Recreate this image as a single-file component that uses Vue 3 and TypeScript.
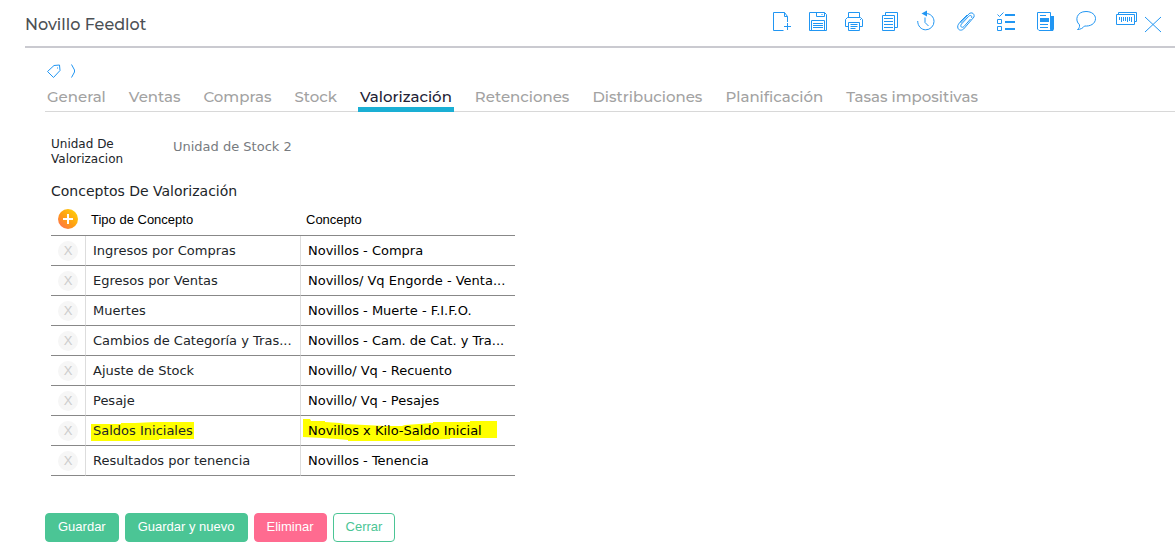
<script setup lang="ts">
import { ref } from 'vue'

interface Concept {
  type: string
  name: string
  marked?: boolean
}

const tabs: string[] = [
  'General',
  'Ventas',
  'Compras',
  'Stock',
  'Valorización',
  'Retenciones',
  'Distribuciones',
  'Planificación',
  'Tasas impositivas',
]
const activeTab = ref('Valorización')
const unit = ref('Unidad de Stock 2')

const concepts = ref<Concept[]>([
  { type: 'Ingresos por Compras', name: 'Novillos - Compra' },
  { type: 'Egresos por Ventas', name: 'Novillos/ Vq Engorde - Venta...' },
  { type: 'Muertes', name: 'Novillos - Muerte - F.I.F.O.' },
  { type: 'Cambios de Categoría y Tras...', name: 'Novillos - Cam. de Cat. y Tra...' },
  { type: 'Ajuste de Stock', name: 'Novillo/ Vq - Recuento' },
  { type: 'Pesaje', name: 'Novillo/ Vq - Pesajes' },
  { type: 'Saldos Iniciales', name: 'Novillos x Kilo-Saldo Inicial', marked: true },
  { type: 'Resultados por tenencia', name: 'Novillos - Tenencia' },
])

function removeConcept(index: number) {
  concepts.value.splice(index, 1)
}
</script>

<template>
  <div class="page">
    <header class="header">
      <h1 class="title">Novillo Feedlot</h1>
      <div class="tools">
        <div class="tool-group">
          <button type="button" class="tool" aria-label="Nuevo">
            <svg viewBox="0 0 20 20"><path d="M11.5 18.500H1.500V.5H12.500L15.500 4.500V10M12.500.5V4.500H15.500M15.500 11V18M12 14.500H19" /></svg>
          </button>
          <button type="button" class="tool" aria-label="Guardar registro">
            <svg viewBox="0 0 20 20"><path d="M1.500.5H16.500L18.500 2.500V18.500H1.500ZM8.500.5V4.500H16.500V.5M13.500 2.500H14.500M3.500 18V8.500H16.500V18M5 11.500H15M5 13.500H15M5 15.500H15" /></svg>
          </button>
          <button type="button" class="tool" aria-label="Imprimir">
            <svg viewBox="0 0 20 20"><path d="M4.500 5V.5H15.500V5M4.500 14.500H1.500V7.500L3.500 5.500H16.500L18.500 7.500V14.500H15.500M4.500 10.500H15.500V18.500H4.500ZM6.500 12.500H13.500M6.500 14.500H13.500M6.500 16.500H11.500M16 7.500H17" /></svg>
          </button>
          <button type="button" class="tool" aria-label="Copiar">
            <svg viewBox="0 0 20 20"><path d="M5.500 3V.5H17.500V15.500H15M2.500 3.500H14.500V18.500H2.500ZM4 6.500H13M4 9.500H13M4 12.500H13M4 15.500H13" /></svg>
          </button>
          <button type="button" class="tool" aria-label="Historial">
            <svg viewBox="0 0 20 20"><path class="solid" d="M5.500 1.500 11-1.500V4.500Z" /><path d="M10 1.500C14.500 1.500 18 5 18 9.500A8.300 8.300 0 0 1 9.700 17.800C5.200 17.800 1.700 14 1.700 9" /><path d="M9 5.500V10.500L12.500 14" /></svg>
          </button>
        </div>
        <div class="tool-group wide">
          <button type="button" class="tool" aria-label="Adjuntos">
            <svg viewBox="0 0 20 20"><path d="M4.500 11 12 3C14-.5 19 .5 18 5L8.500 16C6.500 19 2 19 1.700 15C1.500 13 3 11.500 5 9L11 3M14.500 7 8 14.500C6 16.500 3.500 14.500 5.500 12L12.500 4.500C14 2.500 17 4 15.500 6" /></svg>
          </button>
          <button type="button" class="tool" aria-label="Tareas">
            <svg viewBox="0 0 20 20"><path d="M1.500 2.500 3.500 4.500 7.500.5M1.500 7.500H5.500V11.500H1.500ZM1.500 14.500H5.500V18.500H1.500Z" /><path class="thick" d="M9 3H19M9 10H19M9 17H19" /></svg>
          </button>
          <button type="button" class="tool" aria-label="Novedades">
            <svg viewBox="0 0 20 20"><path class="solid" d="M4 6H13V10H4ZM15 4H18V17L17 19H14Z" /><path d="M14.500 17V.5H1.500V17L3 18.500H16M4 3.500H10M4 12.500H12M4 15.500H12" /></svg>
          </button>
          <button type="button" class="tool" aria-label="Comentarios">
            <svg viewBox="0 0 20 20"><path d="M3.500 12.800C-1.500 8.500 .5-.5 10-.5C16-.5 19.500 3 19.500 6.500C19.500 12 14 14.500 8.500 14C7 16 4.500 17.500 1.500 17.500C3 16.500 3.800 15 3.500 12.800Z" /></svg>
          </button>
          <button type="button" class="tool" aria-label="Códigos">
            <svg viewBox="0 0 20 20"><path d="M2.500 2V.5H20.500V9.500H19M.5 2.500H18.500V12.500H.5ZM3.500 5V8M5.500 5V10M7.500 5V9M9.500 5V9M11.500 5V10M13.500 5V9M15.500 5V10" /></svg>
          </button>
        </div>
        <button type="button" class="tool close" aria-label="Cerrar ventana">
          <svg viewBox="0 0 20 20"><path d="M2 2 18 17M18 2 2 17" /></svg>
        </button>
      </div>
    </header>

    <main class="content">
      <div class="crumbs">
        <svg class="tag" viewBox="0 0 14 14"><path d="M.5 7.500 7 1.500 12.500 1 13 6.500 6.500 13.500Z" /><path d="M10 4H11" /></svg>
        <svg class="chevron" viewBox="0 0 6 14"><path d="M1.500.5 4.500 6V8L1.500 13.500" /></svg>
      </div>
      <nav class="tabs">
        <button
          v-for="tab in tabs"
          :key="tab"
          type="button"
          class="tab"
          :class="{ active: tab === activeTab }"
          @click="activeTab = tab"
        >{{ tab }}</button>
      </nav>

      <section class="panel">
        <div class="field">
          <label for="unit">Unidad De Valorizacion</label>
          <input id="unit" v-model="unit" type="text" readonly />
        </div>

        <h2 class="subtitle">Conceptos De Valorización</h2>
        <table class="grid">
          <colgroup>
            <col class="col-action" />
            <col />
            <col />
          </colgroup>
          <thead>
            <tr>
              <th class="action">
                <button type="button" class="add" aria-label="Agregar concepto">
                  <svg viewBox="0 0 20 20"><path d="M10 5V15M5 10H15" /></svg>
                </button>
              </th>
              <th>Tipo de Concepto</th>
              <th>Concepto</th>
            </tr>
          </thead>
          <tbody>
            <tr v-for="(concept, index) in concepts" :key="concept.type">
              <td class="action">
                <button type="button" class="remove" :aria-label="`Quitar ${concept.type}`" @click="removeConcept(index)">X</button>
              </td>
              <td class="type">
                <span v-if="concept.marked" class="marked">
                  <svg class="mark mark-type" viewBox="0 0 103 19"><path d="M0 2 30 2 30 1 44 1 64 0H103V17H68V18H49V19H0Z" /></svg>
                  <span class="marked-text">{{ concept.type }}</span>
                </span>
                <template v-else>{{ concept.type }}</template>
              </td>
              <td class="name">
                <span v-if="concept.marked" class="marked">
                  <svg class="mark mark-name" viewBox="0 0 194 22"><path d="M0 0H7L8 2H22V3L37 4 42 5 62 6 82 7H99L102 6 130 4V3H167V2H194V19H147V20L117 21V22H45V21L34 20 20 19 0 18Z" /></svg>
                  <span class="marked-text">{{ concept.name }}</span>
                </span>
                <template v-else>{{ concept.name }}</template>
              </td>
            </tr>
          </tbody>
        </table>
      </section>

      <footer class="actions">
        <button type="button" class="btn save">Guardar</button>
        <button type="button" class="btn save">Guardar y nuevo</button>
        <button type="button" class="btn delete">Eliminar</button>
        <button type="button" class="btn outline">Cerrar</button>
      </footer>
    </main>
  </div>
</template>

<style>
body {
  margin: 0;
  background: #fff;
}
</style>

<style scoped>
.page {
  font-family: Verdana, "DejaVu Sans", sans-serif;
  font-size: 13px;
  color: #212529;
}
button {
  padding: 0;
  border: 0;
  background: none;
  font-family: inherit;
  cursor: pointer;
}
svg {
  display: block;
  overflow: visible;
  fill: none;
  stroke: #2196f3;
}
.header {
  display: flex;
  align-items: flex-start;
  justify-content: space-between;
  height: 46px;
  margin-left: 25px;
  border-bottom: 2px solid #cacad0;
}
.title {
  margin: 15px 0 0;
  font: 500 16px/20px Montserrat, Inter, sans-serif;
  color: #4c5054;
}
.tools {
  display: flex;
  padding: 12px 12px 0 0;
  gap: 7px;
}
.tool-group {
  display: flex;
  gap: 16px;
}
.tool-group.wide {
  gap: 20px;
  margin-left: 13px;
}
.tool,
.tool svg {
  width: 20px;
  height: 20px;
}
.tool .solid {
  fill: #2196f3;
  stroke: none;
}
.tool .thick {
  stroke-width: 2px;
}
.close {
  margin-top: 3px;
}
.content {
  padding-left: 45px;
}
.crumbs {
  display: flex;
  gap: 9px;
  padding: 16px 0 0 2px;
}
.tag {
  width: 14px;
  height: 14px;
}
.chevron {
  width: 6px;
  height: 14px;
}
.tabs {
  display: flex;
  gap: 19px;
  height: 33px;
  border-bottom: 1px solid #d8d8d8;
}
.tab {
  height: 34px;
  padding: 9px 2px 0;
  border-bottom: 5px solid transparent;
  font: 500 15px/20px Montserrat, Inter, sans-serif;
  color: #a2a2a2;
  white-space: nowrap;
}
.tab.active {
  border-color: #1aafd4;
  color: #212134;
}
.panel {
  padding: 25px 6px 0;
}
.field {
  display: flex;
  align-items: flex-start;
}
.field label {
  width: 100px;
  margin-right: 22px;
  font-size: 12px;
  line-height: 15px;
}
.field input {
  width: 300px;
  height: 18px;
  padding: 0;
  border: 0;
  outline: 0;
  background: none;
  font-family: inherit;
  font-size: 13px;
  color: #777b80;
}
.subtitle {
  margin: 14px 0 0;
  font-size: 14px;
  font-weight: 400;
  line-height: 20px;
}
.grid {
  width: 464px;
  max-width: 100%;
  margin-top: 4px;
  table-layout: fixed;
  border-spacing: 0;
}
.col-action {
  width: 34px;
}
.grid th,
.grid td {
  box-sizing: border-box;
  padding: 0 7px;
  border-bottom: 1px solid #888;
  text-align: left;
  white-space: nowrap;
}
.grid th {
  height: 31px;
  padding: 0 6px;
  font: 400 13px/20px "Liberation Sans", Arial, sans-serif;
  color: #000;
}
.grid td {
  height: 30px;
  border-left: 1px solid #ddd;
  line-height: 20px;
}
.grid .action {
  padding: 0 7px;
  border-left: 0;
}
.grid th.action {
  padding-bottom: 2px;
}
.name {
  color: #000;
}
.add {
  display: block;
  width: 20px;
  height: 20px;
  border-radius: 50%;
  background: linear-gradient(45deg, #ff6a5c, #ff9d13 45%, #ffd80a);
}
.add svg {
  stroke: #fff;
  stroke-width: 2px;
}
.remove {
  display: block;
  width: 20px;
  height: 20px;
  border-radius: 50%;
  background: #f6f6f6;
  font: 13px/20px "Liberation Sans", Arial, sans-serif;
  color: #ccc;
}
.marked {
  position: relative;
}
.marked-text {
  position: relative;
}
.mark {
  position: absolute;
  fill: #ff0;
  stroke: none;
}
.mark-type {
  top: -1px;
  left: -2px;
  width: 103px;
  height: 19px;
}
.mark-name {
  top: -4px;
  left: -5px;
  width: 194px;
  height: 22px;
}
.actions {
  display: flex;
  gap: 6px;
  padding: 37px 0 10px;
}
.btn {
  height: 29px;
  padding: 0 12px 2px;
  border: 1px solid #4bc595;
  border-radius: 4px;
  font: 13px/20px "Liberation Sans", Arial, sans-serif;
  color: #fff;
}
.save {
  background: #4bc595;
}
.delete {
  border-color: #ff6b90;
  background: #ff6b90;
}
.outline {
  background: #fff;
  color: #4bc595;
}
</style>
